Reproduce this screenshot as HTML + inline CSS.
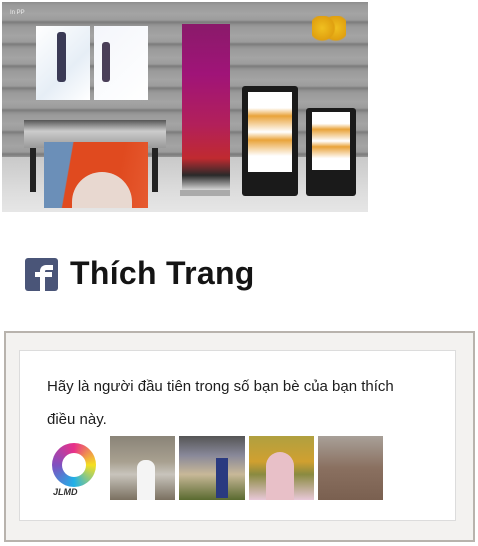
<!DOCTYPE html>
<html><head><meta charset="utf-8"><style>
*{margin:0;padding:0;box-sizing:border-box}
body{width:478px;height:546px;background:#fff;position:relative;overflow:hidden;font-family:"Liberation Sans",Arial,sans-serif}
.a{position:absolute}
.hero{left:2px;top:2px;width:366px;height:210px;overflow:hidden;
background:repeating-linear-gradient(180deg,#8d8d8d 0,#9a9a9a 3px,#a4a4a4 12px,#9c9c9c 18px,#7c7c7c 20px,#8a8a8a 22px)}
.floor{left:0;top:155px;width:366px;height:55px;background:linear-gradient(180deg,#c9c9c9,#dcdcdc 60%,#e6e6e6)}
</style></head><body>
<div class="a hero">
  <div class="a floor"></div>
  <div class="a" style="left:8px;top:8px;color:#eee;font-size:6px">In PP</div>
  <div class="a" style="left:34px;top:24px;width:54px;height:74px;background:linear-gradient(135deg,#fff,#e6eef6 60%,#fff)"></div>
  <div class="a" style="left:55px;top:30px;width:9px;height:50px;background:#3a3a55;border-radius:3px"></div>
  <div class="a" style="left:92px;top:24px;width:54px;height:74px;background:linear-gradient(135deg,#f4f6fb,#fff)"></div>
  <div class="a" style="left:100px;top:40px;width:8px;height:40px;background:#4a3f58;border-radius:3px"></div>
  <div class="a" style="left:180px;top:22px;width:48px;height:168px;background:linear-gradient(180deg,#8a1a6a,#a01478 30%,#b2205a 60%,#c02a30 80%,#2a2a2a 90%,#eee)"></div>
  <div class="a" style="left:178px;top:188px;width:50px;height:6px;background:#aaa"></div>
  <div class="a" style="left:22px;top:118px;width:142px;height:28px;background:linear-gradient(180deg,#555,#ccc 40%,#999)"></div>
  <div class="a" style="left:28px;top:146px;width:6px;height:44px;background:#222"></div>
  <div class="a" style="left:150px;top:146px;width:6px;height:44px;background:#222"></div>
  <div class="a" style="left:42px;top:140px;width:104px;height:66px;background:linear-gradient(100deg,#6b8fb8 0,#6b8fb8 25%,#e04a1f 26%,#e04a1f 70%,#e65a30);"></div>
  <div class="a" style="left:70px;top:170px;width:60px;height:36px;background:#e8d8d0;border-radius:30px 30px 0 0"></div>
  <div class="a" style="left:240px;top:84px;width:56px;height:110px;background:#1a1a1a;border-radius:3px"></div>
  <div class="a" style="left:246px;top:90px;width:44px;height:80px;background:linear-gradient(180deg,#fff 0,#fff 20%,#e9a33a 30%,#fff 50%,#e9a33a 60%,#fff 80%)"></div>
  <div class="a" style="left:304px;top:106px;width:50px;height:88px;background:#1a1a1a;border-radius:3px"></div>
  <div class="a" style="left:310px;top:110px;width:38px;height:58px;background:linear-gradient(180deg,#fff 0,#fff 20%,#e9a33a 30%,#fff 50%,#e9a33a 60%,#fff 80%)"></div>
  <div class="a" style="left:310px;top:14px;width:34px;height:30px;background:radial-gradient(circle at 30% 40%,#f0c020 0,#e0a010 40%,transparent 45%),radial-gradient(circle at 70% 40%,#f0c020 0,#e0a010 40%,transparent 45%)"></div>
</div>

<div class="a" style="left:25px;top:258px;width:33px;height:33px;background:#4a5578;border-radius:3px;overflow:hidden">
  <div class="a" style="left:15px;top:7px;width:13px;height:26px;border:5px solid #fff;border-right:none;border-bottom:none;border-radius:6px 0 0 0"></div>
  <div class="a" style="left:10px;top:14px;width:17px;height:5px;background:#fff"></div>
</div>
<div class="a" style="left:70px;top:255px;font-size:32px;font-weight:bold;color:#141414;letter-spacing:0.3px">Thích Trang</div>

<div class="a" style="left:4px;top:331px;width:471px;height:211px;background:#f3f2f0;border:2px solid #b8b3ad"></div>
<div class="a" style="left:19px;top:350px;width:437px;height:171px;background:#fff;border:1px solid #dcdcdc"></div>
<div class="a" style="left:47px;top:370px;width:372px;font-size:15px;line-height:33px;color:#1d1d1d">Hãy là người đầu tiên trong số bạn bè của bạn thích điều này.</div>

<div class="a" style="left:52px;top:443px;width:44px;height:44px;border-radius:50%;background:conic-gradient(#e8308a,#f5e020,#20b0e8,#8050c0,#e8308a)"></div>
<div class="a" style="left:62px;top:453px;width:24px;height:24px;border-radius:50%;background:#fff"></div>
<div class="a" style="left:53px;top:487px;font-size:9px;font-weight:bold;font-style:italic;color:#333">JLMD</div>
<div class="a" style="left:110px;top:436px;width:65px;height:64px;background:linear-gradient(180deg,#8a8478,#a8a090 40%,#c8c4bc 60%,#7a7060)"></div>
<div class="a" style="left:137px;top:460px;width:18px;height:40px;background:#f4f4f4;border-radius:8px 8px 0 0"></div>
<div class="a" style="left:179px;top:436px;width:66px;height:64px;background:linear-gradient(180deg,#555 0,#889 30%,#c8b898 60%,#5a6a30)"></div>
<div class="a" style="left:216px;top:458px;width:12px;height:40px;background:#2a3a80"></div>
<div class="a" style="left:249px;top:436px;width:65px;height:64px;background:linear-gradient(180deg,#b0a040,#d0a030 40%,#8a8a40 60%,#e8c8d8)"></div>
<div class="a" style="left:266px;top:452px;width:28px;height:48px;background:#e8c0c8;border-radius:14px 14px 0 0"></div>
<div class="a" style="left:318px;top:436px;width:65px;height:64px;background:linear-gradient(180deg,#a8a098,#8a7060 50%,#7a6050)"></div>
</body></html>
